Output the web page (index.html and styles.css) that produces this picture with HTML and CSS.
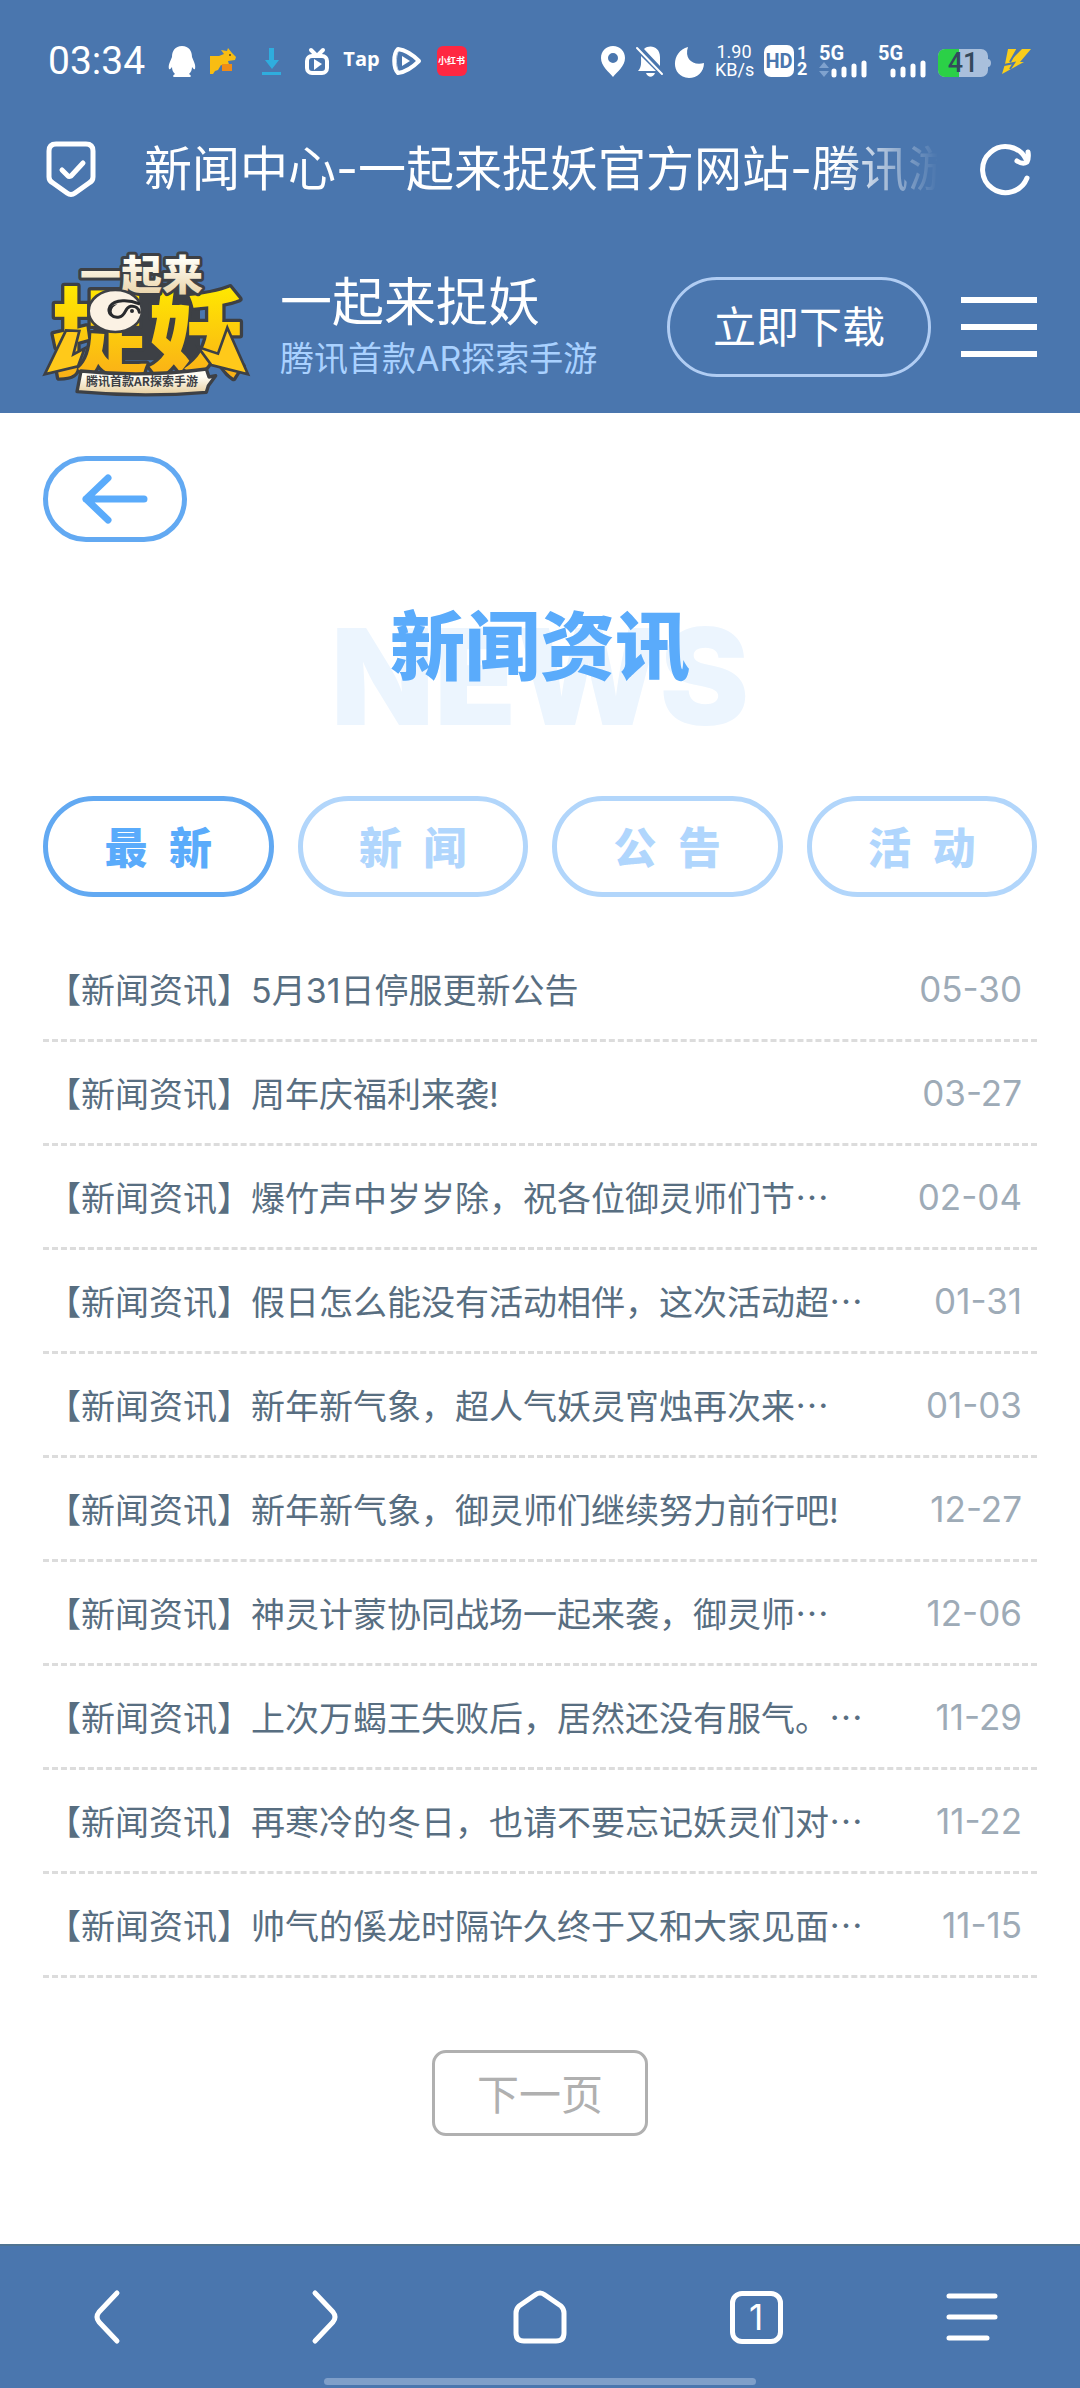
FILE: index.html
```html
<!DOCTYPE html>
<html lang="zh-CN">
<head>
<meta charset="utf-8">
<meta name="viewport" content="width=device-width, initial-scale=1">
<title>新闻中心-一起来捉妖官方网站-腾讯游戏</title>
<link rel="stylesheet" href="styles.css">
</head>
<body>
<header class="top">
  <div class="status">
    <span class="clock">03:34</span>
    <div class="notices">
      <svg viewBox="0 0 45 34"><path fill="#fff" d="M23 2c-7 0-10 5-10 11-2 5-4 8-3 12 1 1 2-1 3-2 0 3 1 5 3 7-2 1-3 3 0 3h14c3 0 2-2 0-3 2-2 3-4 3-7 1 1 2 3 3 2 1-4-1-7-3-12 0-6-3-11-10-11z"/></svg>
      <svg viewBox="0 0 45 34"><path fill="#f8bd12" d="M6 12h9l5-2-3-4 6 1 1-3 4 5 4 4-1 3-7 1 2 7-9-3-3 5-3 1-2 3H6z"/><path fill="#ef8c17" d="M18 20h10v7H18z"/><circle cx="26" cy="11" r="1" fill="#654b19"/></svg>
      <svg viewBox="0 0 45 34"><path fill="#2fadde" d="M20 4h5v12h5l-7 9-7-9h4zM13 28h19v3H13z"/></svg>
      <svg viewBox="0 0 45 34"><g fill="none" stroke="#fff" stroke-width="4" stroke-linecap="round"><rect x="13" y="12" width="20" height="17" rx="5"/><path d="M17 6l5 5M29 6l-5 5"/></g><path fill="#fff" d="M20 15l8 5-8 6z"/></svg>
      <span class="tap">Tap</span>
      <svg viewBox="0 0 45 34"><path fill="none" stroke="#fff" stroke-width="4" stroke-linejoin="round" d="M14 5c-5 5-5 19 0 24 8-1 14-5 21-12C28 10 22 6 14 5z"/><path fill="none" stroke="#bfd0e5" stroke-width="1" d="M14 8c-2 5-2 13 0 18"/><path fill="#fff" d="M18 12l8 5-8 5z"/></svg>
      <span class="red-app"><b>小红书</b></span>
    </div>
    <div class="signals">
      <svg class="w24" viewBox="0 0 24 34"><path fill="#fff" fill-rule="evenodd" d="M12 2C5 2 0 7 0 14c0 8 8 14 12 19 4-5 12-11 12-19C24 7 19 2 12 2zm0 7a5 5 0 110 10 5 5 0 010-10z"/></svg>
      <svg class="w27" viewBox="0 0 27 34"><path fill="#fff" d="M2 27c4-4 3-9 3-15L20 27zM8 5c6-5 16-2 16 8v9zM10 29h9c-2 5-7 5-9 0z"/><path stroke="#fff" stroke-width="2" stroke-linecap="round" d="M1 4l25 26"/></svg>
      <svg class="w30" viewBox="0 0 30 34"><path fill="#fff" d="M14 3C-3 7-4 33 15 34c8 0 15-6 15-15-11 3-20-4-16-16z"/></svg>
      <span class="rate"><span>1.90</span><span>KB/s</span></span>
      <span class="hd"><b>HD</b><span class="sims"><i>1</i><i>2</i></span></span>
      <svg class="w48" viewBox="0 0 48 34"><text class="fiveg" x="0" y="16">5G</text><path fill="#7fa2ce" d="M0 24l5-6 5 6zM0 27h10l-5 6z"/><path stroke="#fff" stroke-width="5" stroke-linecap="round" d="M15 27v4M25 25v6M35 22v9M45 19v12"/></svg>
      <svg class="w48" viewBox="0 0 48 34"><text class="fiveg" x="0" y="16">5G</text><path stroke="#fff" stroke-width="5" stroke-linecap="round" d="M15 27v4M25 25v6M35 22v9M45 19v12"/></svg>
      <svg class="w54" viewBox="0 0 54 34"><path fill="#a9bfdc" d="M8 5h36a7 7 0 017 7v3c4 0 4 8 0 8v3a7 7 0 01-7 7H8a7 7 0 01-7-7V12a7 7 0 017-7z"/><path fill="#2bd047" d="M8 5h14v28H8a7 7 0 01-7-7V12a7 7 0 017-7z"/><text class="charge" x="26" y="28">41</text></svg>
      <svg class="w29" viewBox="0 0 29 34"><path fill="#f9cd1b" d="M6 5h9l-4 9 9-9h9L18 18h4L0 30l3-10z"/><path fill="none" stroke="#4a76ae" stroke-width="2" d="M16 4L8 18M2 21l10-2-4 6"/></svg>
    </div>
  </div>
  <div class="address">
    <svg class="shield" viewBox="0 0 50 56"><path d="M10 3h30q7 0 7 7v26q0 4-4 6L29 52q-4 3-8 0L7 42q-4-2-4-6V10q0-7 7-7z"/><path d="M16 29l6 6q1 1 3 0l12-13"/></svg>
    <div class="page-title">新闻中心-一起来捉妖官方网站-腾讯游戏</div>
    <button class="plain" aria-label="刷新"><svg class="reload" viewBox="0 0 52 52"><path d="M47 35A23 23 0 1 1 46 16"/><path d="M37 18q6 4 10 1 2-4 1-10"/></svg></button>
  </div>
  <div class="site">
    <svg class="logo" viewBox="36 50 636 420" role="img" aria-label="一起来捉妖">
      <defs>
        <linearGradient id="gold" x1="0" y1="0" x2="0" y2="1"><stop offset="0.2" stop-color="#ffe900"/><stop offset="1" stop-color="#f9a41c"/></linearGradient>
        <linearGradient id="cream" x1="0" y1="0" x2="0" y2="1"><stop offset="0.3" stop-color="#fffdf4"/><stop offset="1" stop-color="#e5cc9b"/></linearGradient>
      </defs>
      <path fill="#3d4045" d="M190 150h320v210H190z"/>
      <text class="logo-big" x="66" y="384">捉妖</text>
      <path fill="#ffc91a" stroke="#3d4045" stroke-width="8" d="M108 270L44 402l100-24 20-54-34 18 18-70zM592 262l62 140-110-28-40-54 60 20z"/>
      <text class="logo-small" x="150" y="149">一起来</text>
      <ellipse cx="256" cy="212" rx="80" ry="63" fill="#fbf2e4" stroke="#3d4045" stroke-width="8"/>
      <path fill="none" stroke="#292b2e" stroke-width="9" stroke-linecap="round" d="M326 190c-26-12-72-14-86 8-10 20 8 36 28 32 22-4 14-28 34-32 14-2 24 6 26 18"/>
      <path fill="#292b2e" d="M262 192c-34 2-30 44 2 40-26-8-24-30-2-40z"/>
      <circle cx="306" cy="212" r="6" fill="#292b2e"/>
      <path fill="url(#cream)" stroke="#3d4045" stroke-width="10" stroke-linejoin="round" d="M153 392q190 20 376-6l8 24 20-4-22 30-6 20q-194 16-388-2z"/>
      <text class="logo-note" x="168" y="436">腾讯首款AR探索手游</text>
    </svg>
    <div class="names"><h1>一起来捉妖</h1><p>腾讯首款AR探索手游</p></div>
    <a class="download" href="#">立即下载</a>
    <button class="burger" aria-label="菜单"><i></i><i></i><i></i></button>
  </div>
</header>

<main>
  <a class="back" href="#" aria-label="返回"><svg viewBox="0 0 66 50"><path d="M26 4L4 25l22 21M4 25h58"/></svg></a>
  <div class="hero"><span class="news" aria-hidden="true">NEWS</span><h2>新闻资讯</h2></div>
  <nav class="tabs">
    <button class="on">最&ensp;新</button><button>新&ensp;闻</button><button>公&ensp;告</button><button>活&ensp;动</button>
  </nav>
  <ul class="list">
    <li><a href="#">【新闻资讯】5月31日停服更新公告</a><time>05-30</time></li>
    <li><a href="#">【新闻资讯】周年庆福利来袭!</a><time>03-27</time></li>
    <li><a href="#">【新闻资讯】爆竹声中岁岁除，祝各位御灵师们节<span class="more">…</span></a><time>02-04</time></li>
    <li><a href="#">【新闻资讯】假日怎么能没有活动相伴，这次活动超<span class="more">…</span></a><time>01-31</time></li>
    <li><a href="#">【新闻资讯】新年新气象，超人气妖灵宵烛再次来<span class="more">…</span></a><time>01-03</time></li>
    <li><a href="#">【新闻资讯】新年新气象，御灵师们继续努力前行吧!</a><time>12-27</time></li>
    <li><a href="#">【新闻资讯】神灵计蒙协同战场一起来袭，御灵师<span class="more">…</span></a><time>12-06</time></li>
    <li><a href="#">【新闻资讯】上次万蝎王失败后，居然还没有服气。<span class="more">…</span></a><time>11-29</time></li>
    <li><a href="#">【新闻资讯】再寒冷的冬日，也请不要忘记妖灵们对<span class="more">…</span></a><time>11-22</time></li>
    <li><a href="#">【新闻资讯】帅气的傒龙时隔许久终于又和大家见面<span class="more">…</span></a><time>11-15</time></li>
  </ul>
  <button class="next">下一页</button>
</main>

<footer class="toolbar">
  <div class="tools">
    <button class="plain" aria-label="后退"><svg viewBox="0 0 54 54"><path d="M36 3L18 22q-4 5 0 10l18 19"/></svg></button>
    <button class="plain" aria-label="前进"><svg viewBox="0 0 54 54"><path d="M18 3l18 19q4 5 0 10L18 51"/></svg></button>
    <button class="plain" aria-label="主页"><svg viewBox="0 0 54 54"><path d="M22 5q5-4 10 0l16 11q3 3 3 7v20q0 8-8 8H11q-8 0-8-8V23q0-4 3-7z"/></svg></button>
    <button class="plain" aria-label="标签页"><span class="count">1</span></button>
    <button class="plain" aria-label="更多"><svg viewBox="0 0 54 54"><path d="M4 6h46M4 27h46M4 48h38"/></svg></button>
  </div>
  <div class="handle"></div>
</footer>
</body>
</html>
```
FILE: styles.css
```css
* { box-sizing: border-box; }
body {
  margin: 0;
  min-height: 100vh;
  display: flex;
  flex-direction: column;
  background: #fff;
  font-family: Inter, "Noto Sans CJK SC", sans-serif;
}
h1, h2, p, ul { margin: 0; padding: 0; font-weight: 400; }
a { color: inherit; text-decoration: none; }
button { font: inherit; color: inherit; background: none; border: 0; padding: 0; }
svg { display: block; flex: none; overflow: visible; }
i { font-style: normal; }

.top { background: #4a76ae; color: #fff; }

/* Status bar */
.status { display: flex; align-items: center; height: 122px; padding: 0 49px 0 48px; }
.clock { width: 111px; font: 39px/48px Roboto, sans-serif; }
.notices { display: flex; align-items: center; }
.notices > * { width: 45px; height: 34px; flex: none; }
.tap { font: 700 20px/30px "Open Sans", sans-serif; text-align: center; }
.red-app { display: flex; justify-content: center; align-items: center; }
.red-app b {
  width: 30px;
  border-radius: 6px;
  background: #ff2742;
  font-size: 9px;
  line-height: 30px;
  text-align: center;
}
.signals { display: flex; align-items: center; gap: 11px; margin-left: auto; }
.signals svg { height: 34px; }
.w24 { width: 24px; }
.w27 { width: 27px; }
.w29 { width: 29px; }
.w30 { width: 30px; }
.w48 { width: 48px; }
.w54 { width: 54px; }
.rate {
  display: flex;
  flex-direction: column;
  width: 38px;
  font: 400 18px/18px Roboto, sans-serif;
  text-align: center;
}
.hd { display: flex; gap: 3px; width: 44px; }
.hd b {
  width: 30px;
  border-radius: 7px;
  background: #fff;
  color: #4a76ae;
  font: 700 20px/32px Roboto, sans-serif;
  text-align: center;
}
.sims { display: flex; flex-direction: column; font: 700 18px/16px Roboto, sans-serif; }
.fiveg { fill: #fff; font: 700 20px Roboto, sans-serif; }
.charge { fill: #34495c; font: 500 27px Roboto, sans-serif; text-anchor: middle; }

/* Address bar */
.address { display: flex; align-items: center; height: 94px; padding: 0 48px 0 46px; }
.shield { width: 50px; height: 56px; }
.shield path, .reload path {
  fill: none;
  stroke: #fff;
  stroke-width: 5;
  stroke-linecap: round;
  stroke-linejoin: round;
}
.page-title {
  flex: 1;
  min-width: 0;
  margin: 0 42px 0 48px;
  overflow: hidden;
  white-space: nowrap;
  font-size: 48px;
  line-height: 72px;
  -webkit-mask-image: linear-gradient(to left, transparent, #000 100px);
  mask-image: linear-gradient(to left, transparent, #000 100px);
}
.reload { width: 52px; height: 52px; }

/* Site header */
.site { display: flex; align-items: center; height: 197px; padding: 24px 43px 0 42px; }
.logo { width: 212px; height: 140px; }
.logo-big {
  font: 900 288px "Noto Sans CJK SC", sans-serif;
  fill: url(#gold);
  stroke: #3d4045;
  stroke-width: 20;
  stroke-linejoin: round;
  paint-order: stroke;
}
.logo-small {
  font: 900 123px "Noto Sans CJK SC", sans-serif;
  fill: url(#cream);
  stroke: #3d4045;
  stroke-width: 18;
  stroke-linejoin: round;
  paint-order: stroke;
}
.logo-note { font: 700 36px "Noto Sans CJK SC", sans-serif; fill: #3d4045; }
.names { flex: 1; padding-left: 26px; white-space: nowrap; }
.names h1 { font-size: 52px; line-height: 64px; }
.names p { font-size: 34px; line-height: 48px; color: #a9d1ff; }
.download {
  width: 264px;
  border: 3px solid #b1cdf3;
  border-radius: 50px;
  font-size: 43px;
  line-height: 94px;
  text-align: center;
}
.burger { display: flex; flex-direction: column; gap: 21px; width: 76px; margin-left: 30px; }
.burger i { height: 6px; background: #fff; }

/* News page */
main { flex: 1; display: flex; flex-direction: column; padding: 43px 43px 0; }
.back {
  display: flex;
  justify-content: center;
  align-items: center;
  width: 144px;
  height: 86px;
  border: 5px solid #62a9f2;
  border-radius: 43px;
}
.back svg { width: 66px; height: 50px; }
.back path { fill: none; stroke: #5aabfb; stroke-width: 7; stroke-linecap: round; stroke-linejoin: round; }
.hero { display: grid; justify-items: center; height: 117px; margin: 64px 0 73px; }
.hero > * { grid-area: 1 / 1; }
.news { align-self: end; color: #ecf5fe; font-size: 134px; font-weight: 900; line-height: 94px; }
.hero h2 {
  align-self: start;
  color: #5aabfb;
  font: 900 75px/72px "Noto Sans CJK SC", sans-serif;
}
.tabs { display: grid; grid-template-columns: repeat(4, 1fr); gap: 24px; }
.tabs button {
  height: 101px;
  padding-bottom: 4px;
  border: 5px solid #b2d6fb;
  border-radius: 51px;
  color: #b0d6fd;
  font: 900 43px/60px "Noto Sans CJK SC", sans-serif;
}
.tabs .on { border-color: #62a9f2; color: #5aabfb; }
.list { margin-top: 41px; list-style: none; }
.list li {
  display: flex;
  justify-content: space-between;
  align-items: center;
  height: 104px;
  padding: 0 15px 0 4px;
  border-bottom: 3px dashed #dcdcdc;
  color: #586e81;
  font-size: 34px;
  white-space: nowrap;
}
.more { font-family: "Noto Sans CJK SC", sans-serif; }
.list time { color: #9eabb7; font-size: 35px; }
.next {
  align-self: center;
  width: 216px;
  height: 86px;
  margin: 72px 0;
  padding-bottom: 4px;
  border: 3px solid #b0b0b0;
  border-radius: 14px;
  color: #b0b0b0;
  font-size: 42px;
}

/* Browser toolbar */
.toolbar { background: #4a76ae; border-top: 2px solid #507493; color: #fff; }
.tools { display: grid; grid-template-columns: repeat(5, 1fr); height: 132px; padding-top: 10px; }
.tools button { display: flex; justify-content: center; align-items: center; }
.tools svg { width: 54px; height: 54px; }
.tools path { fill: none; stroke: #fff; stroke-width: 5; stroke-linecap: round; stroke-linejoin: round; }
.count {
  width: 53px;
  border: 5px solid #fff;
  border-radius: 12px;
  font-size: 35px;
  line-height: 43px;
}
.handle { width: 40%; height: 7px; margin: 0 auto 3px; border-radius: 4px; background: #7f9fc9; }
```
